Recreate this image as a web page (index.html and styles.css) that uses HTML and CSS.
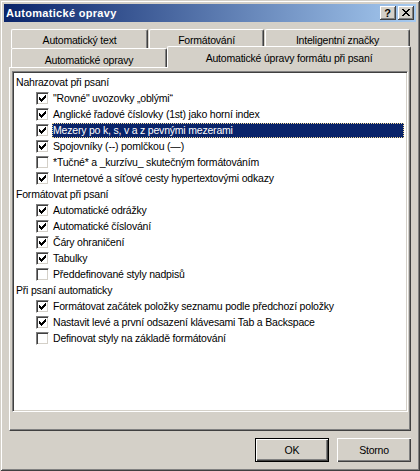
FILE: index.html
```html
<!DOCTYPE html>
<html lang="cs">
<head>
<meta charset="utf-8">
<title>Automatické opravy</title>
<link rel="stylesheet" href="styles.css">
</head>
<body>
<svg width="0" height="0" class="defs">
  <symbol id="chk" viewBox="0 0 7 7">
    <rect x="0" y="2" width="1" height="3"/>
    <rect x="1" y="3" width="1" height="3"/>
    <rect x="2" y="4" width="1" height="3"/>
    <rect x="3" y="3" width="1" height="3"/>
    <rect x="4" y="2" width="1" height="3"/>
    <rect x="5" y="1" width="1" height="3"/>
    <rect x="6" y="0" width="1" height="3"/>
  </symbol>
</svg>
<div class="window">
  <div class="titlebar">
    <span class="title">Automatické opravy</span>
    <div class="tbtns">
      <span class="tbtn help">?</span>
      <span class="tbtn close"><svg width="8" height="7" viewBox="0 0 8 7" shape-rendering="crispEdges"><path d="M0 0h2v1h-2zM6 0h2v1h-2zM1 1h2v1h-2zM5 1h2v1h-2zM2 2h4v1h-4zM3 3h2v1h-2zM2 4h4v1h-4zM1 5h2v1h-2zM5 5h2v1h-2zM0 6h2v1h-2zM6 6h2v1h-2z"/></svg></span>
    </div>
  </div>
  <div class="content">
    <div class="tabs">
      <div class="tabrow back">
        <div class="tab t1">Automatický text</div>
        <div class="tab t2">Formátování</div>
        <div class="tab t3">Inteligentní značky</div>
      </div>
      <div class="tabrow front">
        <div class="tab t4">Automatické opravy</div>
        <div class="tab t5 selected">Automatické úpravy formátu při psaní</div>
      </div>
    </div>
    <div class="panel">
      <ul class="list">
        <li class="head">Nahrazovat při psaní</li>
        <li class="item"><span class="cb on"><svg><use href="#chk"/></svg></span><span class="lbl">"Rovné" uvozovky „oblými“</span></li>
        <li class="item"><span class="cb on"><svg><use href="#chk"/></svg></span><span class="lbl">Anglické řadové číslovky (1st) jako horní index</span></li>
        <li class="item"><span class="cb on"><svg><use href="#chk"/></svg></span><span class="lbl sel">Mezery po k, s, v a z pevnými mezerami</span></li>
        <li class="item"><span class="cb on"><svg><use href="#chk"/></svg></span><span class="lbl">Spojovníky (--) pomlčkou (—)</span></li>
        <li class="item"><span class="cb"></span><span class="lbl">*Tučné* a _kurzívu_ skutečným formátováním</span></li>
        <li class="item"><span class="cb on"><svg><use href="#chk"/></svg></span><span class="lbl">Internetové a síťové cesty hypertextovými odkazy</span></li>
        <li class="head">Formátovat při psaní</li>
        <li class="item"><span class="cb on"><svg><use href="#chk"/></svg></span><span class="lbl">Automatické odrážky</span></li>
        <li class="item"><span class="cb on"><svg><use href="#chk"/></svg></span><span class="lbl">Automatické číslování</span></li>
        <li class="item"><span class="cb on"><svg><use href="#chk"/></svg></span><span class="lbl">Čáry ohraničení</span></li>
        <li class="item"><span class="cb on"><svg><use href="#chk"/></svg></span><span class="lbl">Tabulky</span></li>
        <li class="item"><span class="cb"></span><span class="lbl">Předdefinované styly nadpisů</span></li>
        <li class="head">Při psaní automaticky</li>
        <li class="item"><span class="cb on"><svg><use href="#chk"/></svg></span><span class="lbl">Formátovat začátek položky seznamu podle předchozí položky</span></li>
        <li class="item"><span class="cb on"><svg><use href="#chk"/></svg></span><span class="lbl">Nastavit levé a první odsazení klávesami Tab a Backspace</span></li>
        <li class="item"><span class="cb"></span><span class="lbl">Definovat styly na základě formátování</span></li>
      </ul>
    </div>
    <div class="buttons">
      <button class="btn default">OK</button>
      <button class="btn">Storno</button>
    </div>
  </div>
</div>
</body>
</html>
```

FILE: styles.css
```css
html, body {
  margin: 0;
  padding: 0;
  background: #d4d0c8;
}
.defs {
  position: absolute;
  width: 0;
  height: 0;
}
.window {
  width: 420px;
  height: 471px;
  box-sizing: border-box;
  padding: 4px;
  background: #d4d0c8;
  box-shadow: inset 1px 1px 0 #d4d0c8, inset -1px -1px 0 #404040, inset 2px 2px 0 #ffffff, inset -2px -2px 0 #808080;
  display: flex;
  flex-direction: column;
  font-family: "Liberation Sans", Arial, sans-serif;
  font-size: 10.5px;
  letter-spacing: -0.2px;
  color: #000;
}
.titlebar {
  height: 18px;
  flex: none;
  display: flex;
  align-items: center;
  justify-content: space-between;
  background: linear-gradient(to right, #0a246a, #a6caf0);
  padding: 0 2px 0 2px;
}
.title {
  color: #fff;
  font-weight: bold;
  font-size: 11px;
  letter-spacing: 0.3px;
}
.tbtns {
  display: flex;
  gap: 2px;
}
.tbtn {
  width: 16px;
  height: 14px;
  box-sizing: border-box;
  background: #d4d0c8;
  box-shadow: inset -1px -1px 0 #404040, inset 1px 1px 0 #ffffff, inset -2px -2px 0 #808080;
  display: flex;
  align-items: center;
  justify-content: center;
}
.help {
  font-weight: bold;
  font-size: 11px;
  letter-spacing: 0;
  line-height: 14px;
  padding-right: 1px;
}
.close svg {
  display: block;
  fill: #000;
  margin-top: -1px;
}
.content {
  flex: 1;
  display: flex;
  flex-direction: column;
  padding: 7px 4px 0 5px;
}
.tabs {
  display: flex;
  flex-direction: column;
  padding-left: 2px;
}
.tabrow {
  display: flex;
  height: 19px;
}
.tab {
  box-sizing: border-box;
  height: 19px;
  border-left: 1px solid #fff;
  border-top: 1px solid #fff;
  border-right: 1px solid #404040;
  border-radius: 2px 2px 0 0;
  box-shadow: inset -1px 0 0 #808080;
  background: #d4d0c8;
  display: flex;
  align-items: center;
  justify-content: center;
  padding-top: 1px;
}
.back .tab {
  margin-right: 1px;
}
.t1 { width: 137px; }
.t2 { width: 115px; }
.t3 { width: 145px; }
.t4 { width: 156px; padding-top: 3px; }
.t5 { width: 244px; }
.tab.selected {
  position: relative;
  z-index: 2;
  height: 22px;
  margin-top: -2px;
  padding-top: 1px;
}
.panel {
  box-sizing: border-box;
  width: 402px;
  height: 364px;
  background: #d4d0c8;
  border-left: 1px solid #fff;
  border-top: 1px solid #fff;
  border-right: 1px solid #404040;
  border-bottom: 1px solid #404040;
  box-shadow: inset -1px -1px 0 #808080;
  padding: 3px 2px 0 2px;
}
.list {
  list-style: none;
  margin: 0;
  box-sizing: border-box;
  width: 396px;
  height: 341px;
  background: #fff;
  border-left: 1px solid #808080;
  border-top: 1px solid #808080;
  border-right: 1px solid #fff;
  border-bottom: 1px solid #fff;
  box-shadow: inset 1px 1px 0 #404040, inset -1px -1px 0 #d4d0c8;
  padding: 2px 2px 0 3px;
}
.list li {
  height: 16px;
  display: flex;
  align-items: center;
}
.head {
  padding-left: 0;
}
.item {
  padding-left: 20px;
}
.cb {
  flex: none;
  width: 13px;
  height: 13px;
  box-sizing: border-box;
  background: #fff;
  border-left: 1px solid #808080;
  border-top: 1px solid #808080;
  border-right: 1px solid #fff;
  border-bottom: 1px solid #fff;
  box-shadow: inset 1px 1px 0 #404040, inset -1px -1px 0 #d4d0c8;
  display: flex;
  align-items: flex-start;
  justify-content: flex-start;
}
.cb svg {
  width: 7px;
  height: 7px;
  margin: 2px 0 0 2px;
  fill: #000;
  shape-rendering: crispEdges;
}
.lbl {
  flex: 1;
  margin-left: 3px;
  margin-right: 1px;
  height: 15px;
  box-sizing: border-box;
  padding-left: 1px;
  display: flex;
  align-items: center;
  white-space: nowrap;
}
.lbl.sel {
  background: #0a246a;
  color: #fff;
  outline: 1px dotted #f5db95;
  outline-offset: -1px;
}
.buttons {
  display: flex;
  justify-content: flex-end;
  gap: 8px;
  margin-top: 7px;
  padding-right: 1px;
}
.btn {
  width: 74px;
  height: 24px;
  box-sizing: border-box;
  background: #d4d0c8;
  border: none;
  font-family: "Liberation Sans", Arial, sans-serif;
  font-size: 10.5px;
  letter-spacing: -0.2px;
  color: #000;
  padding: 0;
  box-shadow: inset 1px 1px 0 #ffffff, inset -1px -1px 0 #404040, inset -2px -2px 0 #808080;
}
.btn.default {
  border: 1px solid #000;
  box-shadow: inset 1px 1px 0 #ffffff, inset -1px -1px 0 #404040, inset -2px -2px 0 #808080;
}
```
